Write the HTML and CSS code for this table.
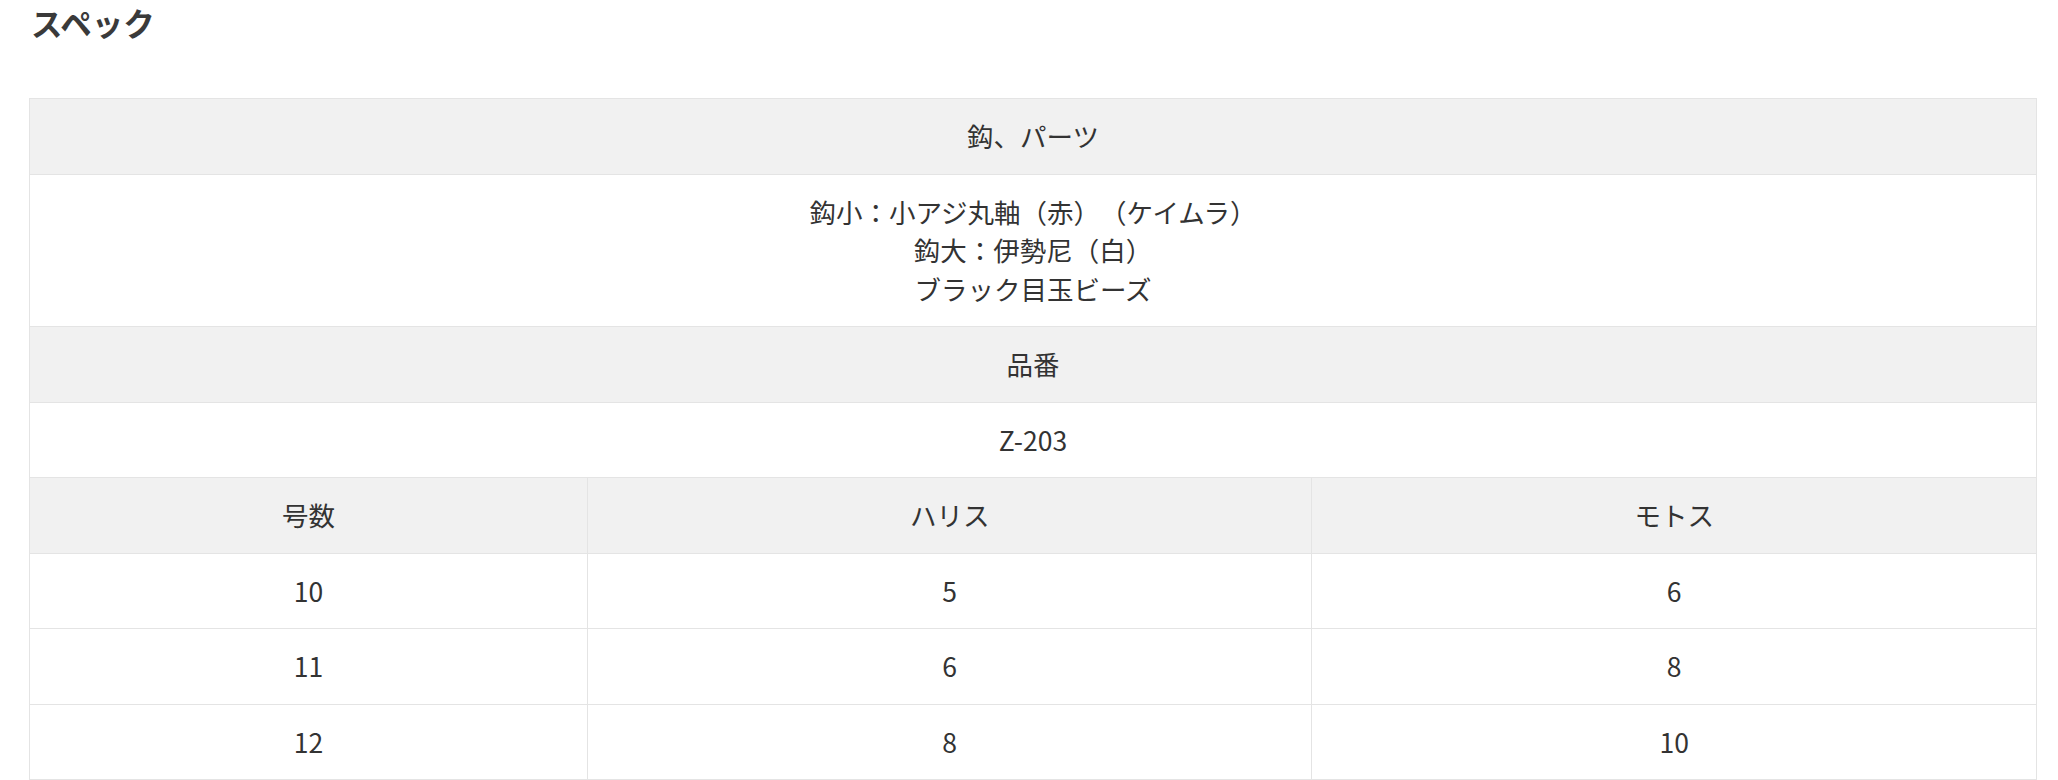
FILE: index.html
```html
<!DOCTYPE html>
<html lang="ja">
<head>
<meta charset="utf-8">
<title>スペック</title>
<link rel="stylesheet" href="styles.css">
</head>
<body>
<section class="spec">
  <h2 class="spec-title">スペック</h2>
  <table class="spec-table">
    <colgroup>
      <col class="c1"><col class="c2"><col class="c3">
    </colgroup>
    <tbody>
      <tr class="head"><th colspan="3">鈎、パーツ</th></tr>
      <tr><td colspan="3">鈎小：小アジ丸軸（赤）（ケイムラ）<br>鈎大：伊勢尼（白）<br>ブラック目玉ビーズ</td></tr>
      <tr class="head"><th colspan="3">品番</th></tr>
      <tr><td colspan="3">Z-203</td></tr>
      <tr class="head"><th>号数</th><th>ハリス</th><th>モトス</th></tr>
      <tr><td>10</td><td>5</td><td>6</td></tr>
      <tr><td>11</td><td>6</td><td>8</td></tr>
      <tr><td>12</td><td>8</td><td>10</td></tr>
      <tr><td>13</td><td>8</td><td>10</td></tr>
    </tbody>
  </table>
</section>
</body>
</html>
```
FILE: styles.css
```css
html, body {
  margin: 0;
  padding: 0;
  background: #ffffff;
}
body {
  font-family: "Noto Sans CJK JP", "Noto Sans", sans-serif;
  color: #333333;
  text-spacing-trim: space-all;
}
.spec {
  padding: 0 21px 0 29px;
}
.spec-title {
  margin: 0 0 54px 0;
  padding-left: 2px;
  font-size: 31.5px;
  line-height: 44px;
  font-weight: 700;
  color: #3a3a3a;
}
.spec-table {
  width: 100%;
  border-collapse: collapse;
  table-layout: fixed;
  font-size: 26.5px;
}
.spec-table .c1 { width: 27.8%; }
.spec-table .c2 { width: 36.1%; }
.spec-table .c3 { width: 36.1%; }
.spec-table th,
.spec-table td {
  border: 1px solid #e4e4e4;
  padding: 18px 10px;
  line-height: 38.5px;
  text-align: center;
  font-weight: 400;
  color: #333333;
  text-spacing-trim: space-all;
}
.spec-table .head th {
  background: #f1f1f1;
}
```
